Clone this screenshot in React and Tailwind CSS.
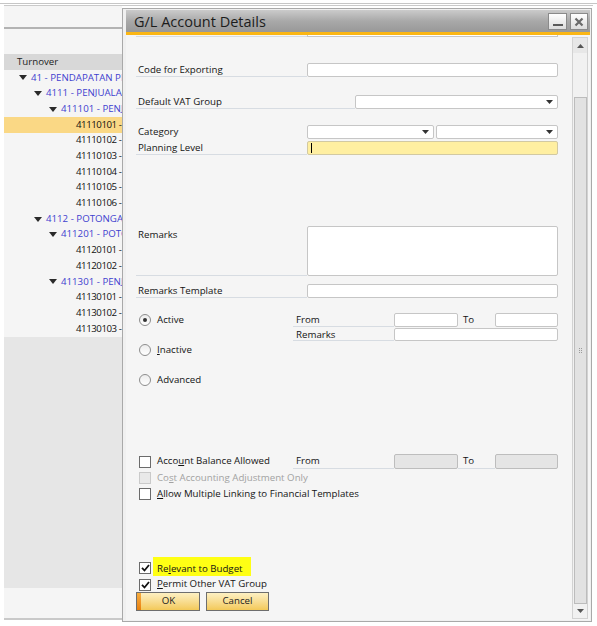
import React from "react";

const treeRows = [
  { lvl: 0, t: "41 - PENDAPATAN PENJUALAN", blue: true },
  { lvl: 1, t: "4111 - PENJUALAN", blue: true },
  { lvl: 2, t: "411101 - PENJUALAN", blue: true },
  { lvl: 3, t: "41110101 -", sel: true },
  { lvl: 3, t: "41110102 -" },
  { lvl: 3, t: "41110103 -" },
  { lvl: 3, t: "41110104 -" },
  { lvl: 3, t: "41110105 -" },
  { lvl: 3, t: "41110106 -" },
  { lvl: 1, t: "4112 - POTONGAN", blue: true },
  { lvl: 2, t: "411201 - POTONGAN", blue: true },
  { lvl: 3, t: "41120101 -" },
  { lvl: 3, t: "41120102 -" },
  { lvl: 2, t: "411301 - PENJUALAN", blue: true },
  { lvl: 3, t: "41130101 -" },
  { lvl: 3, t: "41130102 -" },
  { lvl: 3, t: "41130103 -" },
];

const indent = ["pl-[15px]", "pl-[30px]", "pl-[45px]", "pl-[72px] tracking-[-0.45px]"];

const Tri = () => (
  <svg width="8" height="5" viewBox="0 0 8 5" className="shrink-0 mr-[4px]">
    <path d="M0 0H8L4 5Z" fill="#2a2a2a" />
  </svg>
);

const DD = () => (
  <svg width="7" height="4" viewBox="0 0 7 4">
    <path d="M0 0H7L3.5 4Z" fill="#333" />
  </svg>
);

function Input({ w, yellow, disabled, dd, children }) {
  const tone = yellow
    ? "bg-[#ffefa1] border-[#d2c9a2]"
    : disabled
    ? "bg-[#e5e5e5] border-[#bdbdbd]"
    : "bg-white border-[#c6c6c6]";
  return (
    <div className={`${w} h-full border rounded-[2px] flex items-center ${dd ? "justify-end pr-[4px]" : ""} ${tone}`}>
      {dd && <DD />}
      {children}
    </div>
  );
}

function Label({ w, line = true, children }) {
  return (
    <div
      className={`${w} h-full pl-[2px] ${line ? "border-b border-[#d7dce2]" : ""} leading-[13px] whitespace-nowrap`}
    >
      {children}
    </div>
  );
}

function Check({ checked, disabled }) {
  return (
    <div
      className={`w-[12px] h-[12px] border flex items-center justify-center shrink-0 ${
        disabled ? "bg-[#e9e9e9] border-[#cacaca]" : "bg-white border-[#6b6b6b]"
      }`}
    >
      {checked && (
        <svg width="9" height="8" viewBox="0 0 9 8">
          <path d="M1 3.8L3.5 6.5L8 1" stroke="#111" strokeWidth="1.8" fill="none" />
        </svg>
      )}
    </div>
  );
}

function Radio({ checked }) {
  return (
    <div className="w-[12px] h-[12px] rounded-full border border-[#8d8d8d] bg-linear-to-b from-[#ececec] to-white flex items-center justify-center shrink-0">
      {checked && <div className="w-[4px] h-[4px] rounded-full bg-[#333]" />}
    </div>
  );
}

export default function App() {
  return (
    <div className="relative w-[597px] h-[626px] bg-white overflow-hidden font-['Open_Sans',sans-serif] text-[9.7px] text-[#141414]">
      {/* background window */}
      <div className="h-[3px]" />
      <div className="h-px w-[597px] bg-[#c6c6c6]" />
      <div className="h-[1px]" />
      <div className="ml-[4px] w-[589px] h-[615px] border-t border-[#c9c9c9] flex">
        <div className="w-[118px] h-full flex flex-col bg-[#f5f5f5] overflow-hidden border-b-2 border-[#c9c9c9]">
          <div className="h-[21px]" />
          <div className="h-[2px] bg-[#b3b3b3]" />
          <div className="h-[25px]" />
          <div className="h-[16px] bg-[#d8d8d8] pl-[13px] leading-[16px] text-[#222]">Turnover</div>
          {treeRows.map((r, i) => (
            <div
              key={i}
              className={`h-[15.7px] flex items-center whitespace-nowrap ${indent[r.lvl]} ${
                r.sel ? "bg-[#fad885]" : ""
              } ${r.blue ? "text-[#3f3fcf]" : "text-[#111]"}`}
            >
              {r.lvl < 3 && <Tri />}
              {r.t}
            </div>
          ))}
          <div className="h-[251px] bg-[#e6e6e6]" />
          <div className="flex-1" />
        </div>
      </div>

      {/* dialog */}
      <div className="absolute left-[122px] top-[8px] w-[470px] h-[614px] border border-[#a9a9a9] bg-[#f0f0f0] pl-[3px] pt-[1px] pr-[1px] pb-[1px] flex flex-col">
        <div className="h-[22px] flex bg-linear-to-b from-[#cbcbcb] via-[#a9a9a9] to-[#989898] pl-[8px] pr-[2px]">
          <div className="flex-1 text-[14.5px] leading-[24px] text-[#1c1c1c]">G/L Account Details</div>
          <div className="flex gap-[3px] pt-[3px]">
            <div className="w-[19px] h-[17px] border border-[#8a8a8a] bg-linear-to-b from-white to-[#dcdcdc] flex items-end justify-center pb-[3px]">
              <div className="w-[10px] h-[2px] bg-[#5a5a5a]" />
            </div>
            <div className="w-[18px] h-[17px] border border-[#8a8a8a] bg-linear-to-b from-white to-[#dcdcdc] flex items-center justify-center">
              <svg width="10" height="10" viewBox="0 0 10 10">
                <path d="M1.5 1.5L8.5 8.5M8.5 1.5L1.5 8.5" stroke="#6a6a6a" strokeWidth="2.2" />
              </svg>
            </div>
          </div>
        </div>
        <div className="h-[3px] bg-[#fbb614]" />
        <div className="flex-1 flex bg-[#f5f5f5]">
          {/* form */}
          <div className="flex-1 flex flex-col pl-[10px]">
            <div className="flex h-[2px]">
              <div className="w-[171px] border-b border-[#d7dce2]" />
              <div className="w-[251px] bg-white border-x border-b border-[#c6c6c6]" />
            </div>

            <div className="mt-[26px] flex h-[14px]">
              <Label w="w-[171px]">Code for Exporting</Label>
              <Input w="w-[251px]" />
            </div>

            <div className="mt-[18px] flex h-[14px]">
              <Label w="w-[219px]">Default VAT Group</Label>
              <Input w="w-[203px]" dd />
            </div>

            <div className="mt-[16px] flex h-[14px]">
              <Label w="w-[171px]" line={false}>Category</Label>
              <Input w="w-[127px]" dd />
              <div className="w-[2px]" />
              <Input w="w-[122px]" dd />
            </div>

            <div className="mt-[2px] flex h-[14px]">
              <Label w="w-[171px]">Planning Level</Label>
              <Input w="w-[251px]" yellow>
                <div className="ml-[3px] w-px h-[10px] bg-black" />
              </Input>
            </div>

            <div className="mt-[71px] flex h-[50px]">
              <Label w="w-[171px]">
                <div className="pt-[2px]">Remarks</div>
              </Label>
              <Input w="w-[251px]" />
            </div>

            <div className="mt-[8px] flex h-[14px]">
              <Label w="w-[171px]">Remarks Template</Label>
              <Input w="w-[251px]" />
            </div>

            {/* status radios */}
            <div className="mt-[15px] flex">
              <div className="w-[157px] flex flex-col gap-[16px] pl-[3px]">
                <div className="h-[14px] flex items-center gap-[6px]">
                  <Radio checked />
                  <span>Active</span>
                </div>
                <div className="h-[14px] flex items-center gap-[6px]">
                  <Radio />
                  <span>
                    <u>I</u>nactive
                  </span>
                </div>
                <div className="h-[14px] flex items-center gap-[6px]">
                  <Radio />
                  <span>Advanced</span>
                </div>
              </div>
              <div className="flex flex-col">
                <div className="flex h-[14px]">
                  <Label w="w-[101px]">
                    <span className="pl-[1px]">From</span>
                  </Label>
                  <Input w="w-[64px]" />
                  <div className="w-[37px] pl-[5px] leading-[13px]">To</div>
                  <Input w="w-[63px]" />
                </div>
                <div className="mt-[1px] flex h-[13px]">
                  <Label w="w-[101px]">
                    <span className="pl-[1px]">Remarks</span>
                  </Label>
                  <Input w="w-[164px]" />
                </div>
              </div>
            </div>

            {/* account balance */}
            <div className="mt-[67px] flex h-[15px]">
              <div className="w-[157px] flex items-center gap-[6px] pl-[3px]">
                <Check />
                <span>
                  Acco<u>u</u>nt Balance Allowed
                </span>
              </div>
              <Label w="w-[101px]">
                <span className="pl-[1px] leading-[14px]">From</span>
              </Label>
              <Input w="w-[64px]" disabled />
              <Label w="w-[37px]">
                <span className="pl-[3px] leading-[14px]">To</span>
              </Label>
              <Input w="w-[63px]" disabled />
            </div>
            <div className="mt-[1px] h-[16px] flex items-center gap-[6px] pl-[3px] text-[#a2a2a2]">
              <Check disabled />
              <span>
                Co<u>s</u>t Accounting Adjustment Only
              </span>
            </div>
            <div className="h-[16px] flex items-center gap-[6px] pl-[3px]">
              <Check />
              <span>
                <u>A</u>llow Multiple Linking to Financial Templates
              </span>
            </div>

            {/* bottom */}
            <div className="mt-[58px] h-[16px] flex items-center gap-[2px] pl-[3px]">
              <Check checked />
              <span className="bg-[#ffff14] pl-[4px] pr-[8px] pt-[5px] pb-[1px] -mt-[4px] leading-[13px]">
                Re<u>l</u>evant to Budget
              </span>
            </div>
            <div className="mt-[1px] h-[15px] flex items-center gap-[6px] pl-[3px]">
              <Check checked />
              <span>
                <u>P</u>ermit Other VAT Group
              </span>
            </div>
            <div className="h-[19px] flex gap-[6px]">
              <div className="w-[64px] h-full border border-[#6e6e6e] flex bg-linear-to-b from-[#fdf0c2] to-[#f3c957]">
                <div className="w-[4px] h-full bg-linear-to-b from-[#f7ad3e] to-[#e8800a]" />
                <div className="flex-1 flex items-center justify-center text-[#222] pr-[3px]">OK</div>
              </div>
              <div className="w-[63px] h-full border border-[#6e6e6e] flex items-center justify-center bg-linear-to-b from-[#fdf0c2] to-[#f3c957] text-[#222]">
                Cancel
              </div>
            </div>
          </div>

          {/* scrollbar */}
          <div className="w-[16px] mt-[2px] mb-[1px] mr-[2px] border border-[#d2d2d2] bg-[#f1f1f1] flex flex-col items-center">
            <div className="w-full h-[15px] bg-[#e7e7e7] flex items-center justify-center">
              <svg width="7" height="4" viewBox="0 0 7 4">
                <path d="M0 4H7L3.5 0Z" fill="#555" />
              </svg>
            </div>
            <div className="h-[44px]" />
            <div className="flex-1 w-[13px] border border-[#bcbcbc] bg-[#e2e2e2] flex items-center justify-center">
              <div className="grid grid-cols-2 gap-[1px]">
                <div className="w-px h-px bg-[#9a9a9a]" />
                <div className="w-px h-px bg-[#9a9a9a]" />
                <div className="w-px h-px bg-[#9a9a9a]" />
                <div className="w-px h-px bg-[#9a9a9a]" />
                <div className="w-px h-px bg-[#9a9a9a]" />
                <div className="w-px h-px bg-[#9a9a9a]" />
              </div>
            </div>
            <div className="w-full h-[14px] flex items-center justify-center">
              <svg width="7" height="4" viewBox="0 0 7 4">
                <path d="M0 0H7L3.5 4Z" fill="#555" />
              </svg>
            </div>
          </div>
        </div>
      </div>
    </div>
  );
}
